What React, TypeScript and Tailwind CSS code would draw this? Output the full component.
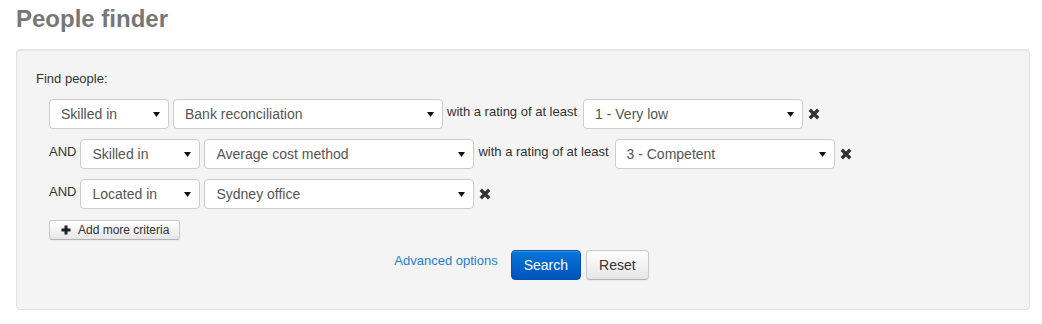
import React from 'react'

const font = "font-['Liberation_Sans',Arial,sans-serif]"

interface FakeSelectProps {
  value: string
  className: string
}

function FakeSelect({ value, className }: FakeSelectProps) {
  return (
    <div
      className={`${className} h-[30px] flex items-center justify-between pl-[11px] pr-[8px] bg-white border border-[#cccccc] rounded-[4px] text-[14px] leading-[20px] text-[#555555] shrink-0`}
    >
      <span>{value}</span>
      <svg width="7" height="5" viewBox="0 0 7 5" className="mt-[1px]">
        <polygon points="0,0 7,0 3.5,5" fill="#111111" />
      </svg>
    </div>
  )
}

function RemoveIcon() {
  return (
    <svg width="12" height="12" viewBox="0 0 12 12" className="ml-[1px] mb-[1px] shrink-0">
      <path d="M1.8 1.8 L10.2 10.2 M10.2 1.8 L1.8 10.2" stroke="#333333" strokeWidth="3.4" strokeLinecap="butt" />
    </svg>
  )
}

function Label({ children }: { children: React.ReactNode }) {
  return <span className="text-[13px] leading-[18px] text-[#333333] mb-[4px] shrink-0">{children}</span>
}

const RatingText = () => <span className="text-[13px] leading-[18px] text-[#333333] mb-[4px] mr-[2px] shrink-0">with a rating of at least</span>

export default function App() {
  return (
    <div className={`${font} bg-white w-[1042px] h-[324px] overflow-hidden`}>
      <h2 className="ml-4 text-[24px] leading-[38px] font-bold text-[#777777]">People finder</h2>

      <div className="ml-4 mt-[11px] w-[1014px] bg-[#f4f4f4] border border-[#e3e3e3] rounded-[4px] shadow-[inset_0_1px_1px_rgba(0,0,0,0.05)] pt-[20px] pl-[19px] pr-[22px] pb-[29px]">
        <div className="text-[13px] leading-[18px] text-[#333333]">Find people:</div>

        <div className="ml-[13px] mt-[11px] flex flex-col gap-[10px]">
          <div className="flex items-center gap-1 h-[30px]">
            <FakeSelect value="Skilled in" className="w-[120px]" />
            <FakeSelect value="Bank reconciliation" className="w-[270px]" />
            <RatingText />
            <FakeSelect value="1 - Very low" className="w-[220px]" />
            <RemoveIcon />
          </div>

          <div className="flex items-center gap-1 h-[30px]">
            <Label>AND</Label>
            <FakeSelect value="Skilled in" className="w-[120px]" />
            <FakeSelect value="Average cost method" className="w-[270px]" />
            <RatingText />
            <FakeSelect value="3 - Competent" className="w-[220px]" />
            <RemoveIcon />
          </div>

          <div className="flex items-center gap-1 h-[30px]">
            <Label>AND</Label>
            <FakeSelect value="Located in" className="w-[120px]" />
            <FakeSelect value="Sydney office" className="w-[270px]" />
            <RemoveIcon />
          </div>

          {/* add criteria */}
          <div className="mt-px">
            <button className="h-[20px] w-[131px] flex items-center pl-[11px] border border-[#cccccc] border-b-[#b3b3b3] rounded-[3px] bg-gradient-to-b from-white to-[#e6e6e6] shadow-[0_1px_2px_rgba(0,0,0,0.05)] text-[12px] leading-[16px] text-[#333333]">
              <svg width="10" height="10" viewBox="0 0 10 10" className="mr-[7px]">
                <path d="M5 0.5 V9.5 M0.5 5 H9.5" stroke="#222222" strokeWidth="3" />
              </svg>
              Add more criteria
            </button>
          </div>
        </div>

        <div className="mt-[10px] flex justify-center items-start">
          <a href="#" className="mt-[2px] mr-[13px] text-[13px] leading-[18px] text-[#1f80cf]">Advanced options</a>
          <button className="h-[30px] px-3 rounded-[4px] border border-[#0450b0] bg-gradient-to-b from-[#0876da] to-[#0052bd] text-white text-[14px] leading-[20px] shadow-[inset_0_1px_0_rgba(255,255,255,0.2)]">
            Search
          </button>
          <button className="ml-[5px] h-[30px] px-3 rounded-[4px] border border-[#cccccc] border-b-[#b3b3b3] bg-gradient-to-b from-white to-[#e6e6e6] text-[#333333] text-[14px] leading-[20px] shadow-[0_1px_2px_rgba(0,0,0,0.05)]">
            Reset
          </button>
        </div>
      </div>
    </div>
  )
}
